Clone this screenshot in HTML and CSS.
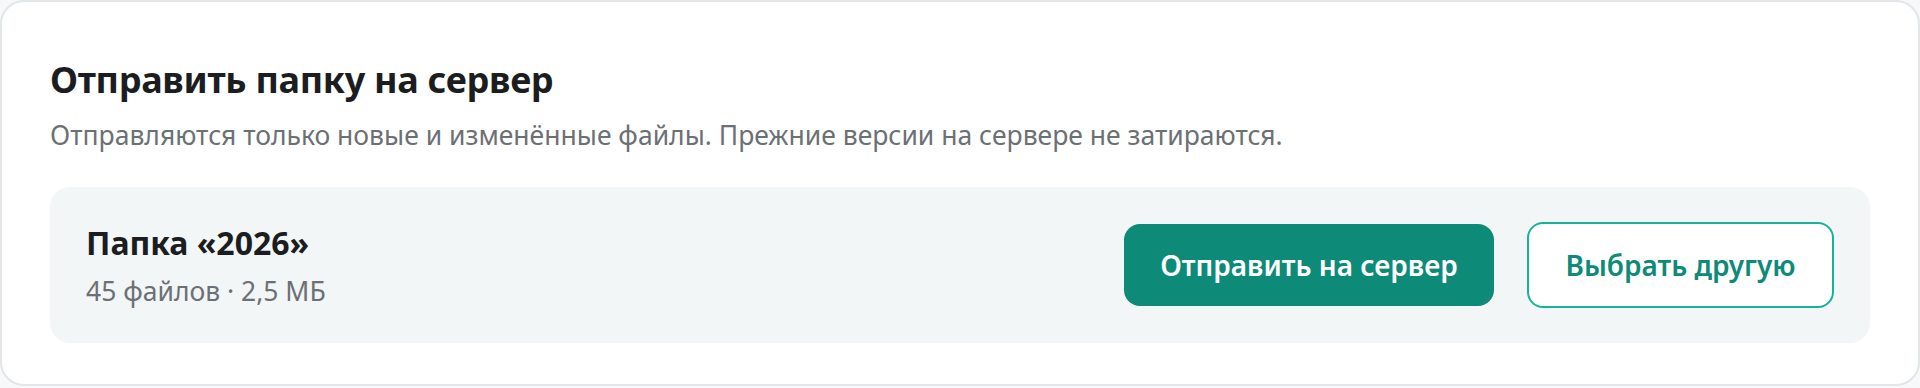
FILE: index.html
```html
<!DOCTYPE html>
<html>
<head>
  <title>Отправить папку на сервер</title>
  <link rel="stylesheet" href="styles.css">
</head>
<body>
  <div class="card">
    <h1>Отправить папку на сервер</h1>
    <p class="hint">Отправляются только новые и изменённые файлы. Прежние версии на сервере не затираются.</p>

    <div class="folder">
      <div class="folder-info">
        <div class="folder-name">Папка «2026»</div>
        <div class="folder-meta">45 файлов · 2,5 МБ</div>
      </div>
      <div class="button-group">
        <button id="upload" class="primary">Отправить на сервер</button>
        <button id="choose" class="outline">Выбрать другую</button>
      </div>
    </div>
  </div>
</body>
</html>
```

FILE: styles.css
```css
:root {
  --primary: #0e8a78;
  --primary-light: #17b29b;
  --panel: #f2f6f7;
  --border: #e2e6e9;
  --text: #1b1d20;
  --text-light: #6b7075;
}

body {
  margin: 0;
  background: #f6f8f9;
  font-family: 'Noto Sans', 'Open Sans', sans-serif;
  color: var(--text);
}

.card {
  box-sizing: border-box;
  height: 386px;
  padding: 54px 48px 0;
  background: white;
  border: 2px solid var(--border);
  border-radius: 24px;
}

h1 {
  margin: 0;
  font-size: 36px;
  line-height: 48px;
  font-weight: 700;
  letter-spacing: -0.3px;
}

.hint {
  margin: 13px 0 0;
  font-size: 26.5px;
  line-height: 36px;
  color: var(--text-light);
}

.folder {
  display: flex;
  align-items: center;
  justify-content: space-between;
  margin-top: 34px;
  padding: 35px 36px;
  background: var(--panel);
  border-radius: 20px;
}

.folder-name {
  font-size: 32px;
  line-height: 40px;
  font-weight: 700;
}

.folder-meta {
  margin-top: 11px;
  font-size: 26.5px;
  line-height: 34px;
  color: var(--text-light);
}

.button-group {
  display: flex;
  align-items: center;
  gap: 33px;
}

button {
  box-sizing: border-box;
  font-family: inherit;
  font-size: 28px;
  font-weight: 600;
  border-radius: 16px;
  cursor: pointer;
}

.primary {
  width: 370px;
  height: 82px;
  border: none;
  background: var(--primary);
  color: white;
}

.outline {
  width: 307px;
  height: 86px;
  border: 2px solid var(--primary-light);
  background: white;
  color: var(--primary);
}
```
